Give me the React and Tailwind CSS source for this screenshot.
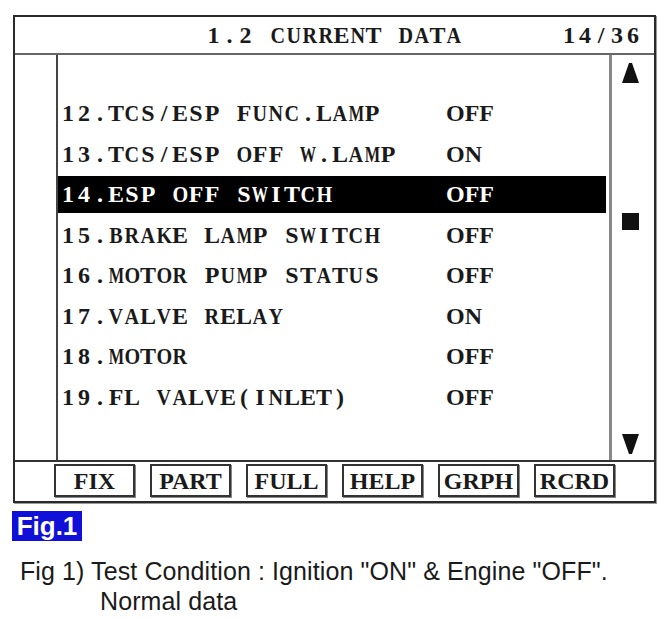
import React from 'react';

const rows = [
  ['12.TCS/ESP FUNC.LAMP', 'OFF'],
  ['13.TCS/ESP OFF W.LAMP', 'ON'],
  ['14.ESP OFF SWITCH', 'OFF', true],
  ['15.BRAKE LAMP SWITCH', 'OFF'],
  ['16.MOTOR PUMP STATUS', 'OFF'],
  ['17.VALVE RELAY', 'ON'],
  ['18.MOTOR', 'OFF'],
  ['19.FL VALVE(INLET)', 'OFF'],
];

const buttons = ['FIX', 'PART', 'FULL', 'HELP', 'GRPH', 'RCRD'];

const serif = { fontFamily: '"Liberation Serif", "DejaVu Serif", serif' };

const WIDE = 'MW';
const BROAD = 'ABCDGHKNOQRUVXY';

const glyphClass = (c) => {
  if (WIDE.includes(c)) return 'inline-block scale-x-[0.68]';
  if (BROAD.includes(c)) return 'inline-block scale-x-[0.84]';
  return 'inline-block';
};

// fixed 16px character cells, like the scan tool's bitmap font
const Cells = ({ text }) => (
  <span className="flex">
    {text.split('').map((c, i) => (
      <span key={i} className="w-[16px] shrink-0 flex justify-center whitespace-pre">
        <span className={glyphClass(c)}>{c}</span>
      </span>
    ))}
  </span>
);

const Triangle = ({ down }) => (
  <svg width="17" height="20" viewBox="0 0 17 20">
    {down ? (
      <polygon points="0,0 17,0 10,20 7,20" fill="#111" />
    ) : (
      <polygon points="7,0 10,0 17,20 0,20" fill="#111" />
    )}
  </svg>
);

export default function App() {
  return (
    <div className="w-[671px] h-[619px] bg-white overflow-hidden">
      <div className="pt-[15px] pl-[13px]">
        {/* Scan tool screen */}
        <div className="w-[643px] h-[488px] border-2 border-[#2a2a2a] shadow-[1px_1px_0_#999] flex flex-col">
          {/* Header */}
          <div
            className="h-[38px] shrink-0 border-b-2 border-[#666] relative flex items-center justify-center font-bold text-[24px] text-[#1a1a1a]"
            style={serif}
          >
            <span className="ml-[-2px]">
              <Cells text="1.2 CURRENT DATA" />
            </span>
            <span className="absolute right-[13px]">
              <Cells text="14/36" />
            </span>
          </div>

          {/* Body */}
          <div className="h-[407px] shrink-0 flex border-b-2 border-[#333]">
            <div className="w-[43px] shrink-0 border-r-2 border-[#444]" />
            <div className="flex-1 pt-[38px] pr-[3px]" style={serif}>
              {rows.map(([label, value, sel]) => (
                <div key={label} className="h-[40.5px] flex items-center">
                  <div
                    className={`w-full h-[37px] flex items-center pl-[2px] font-bold text-[24px] ${
                      sel ? 'bg-black text-white' : 'text-[#1a1a1a]'
                    }`}
                  >
                    <span className="w-[386px] shrink-0">
                      <Cells text={label} />
                    </span>
                    <span className="text-[24px]">{value}</span>
                  </div>
                </div>
              ))}
            </div>
            <div className="w-[45px] shrink-0 border-l-[3px] border-[#888] flex flex-col pl-[10px] pt-[8px] pb-[6px]">
              <Triangle />
              <div className="w-[17px] h-[17px] bg-[#111] mt-[130px]" />
              <div className="mt-auto">
                <Triangle down />
              </div>
            </div>
          </div>

          {/* Function keys */}
          <div className="flex-1 flex items-start pt-[2px] pl-[39px] gap-[15px]">
            {buttons.map((b) => (
              <div
                key={b}
                className="w-[81px] h-[33px] border-2 border-[#333] shadow-[1px_1px_0_#888] flex items-center justify-center font-bold text-[24px] text-[#1a1a1a]"
                style={serif}
              >
                {b}
              </div>
            ))}
          </div>
        </div>
      </div>

      {/* Figure label */}
      <div className="pl-[12px] pt-[8px]">
        <div
          className="w-[70px] h-[30px] bg-[#1010d8] text-white font-bold text-[26px] flex items-center justify-center leading-none"
          style={{ fontFamily: '"Liberation Sans", Arial, sans-serif' }}
        >
          Fig.1
        </div>
      </div>

      <div
        className="pl-[20px] pt-[15px] text-[#1a1a1a] text-[25px] leading-[30px] tracking-[0.1px]"
        style={{ fontFamily: '"Liberation Sans", Arial, sans-serif' }}
      >
        <div>Fig 1) Test Condition : Ignition "ON" &amp; Engine "OFF".</div>
        <div className="pl-[80px]">Normal data</div>
      </div>
    </div>
  );
}
